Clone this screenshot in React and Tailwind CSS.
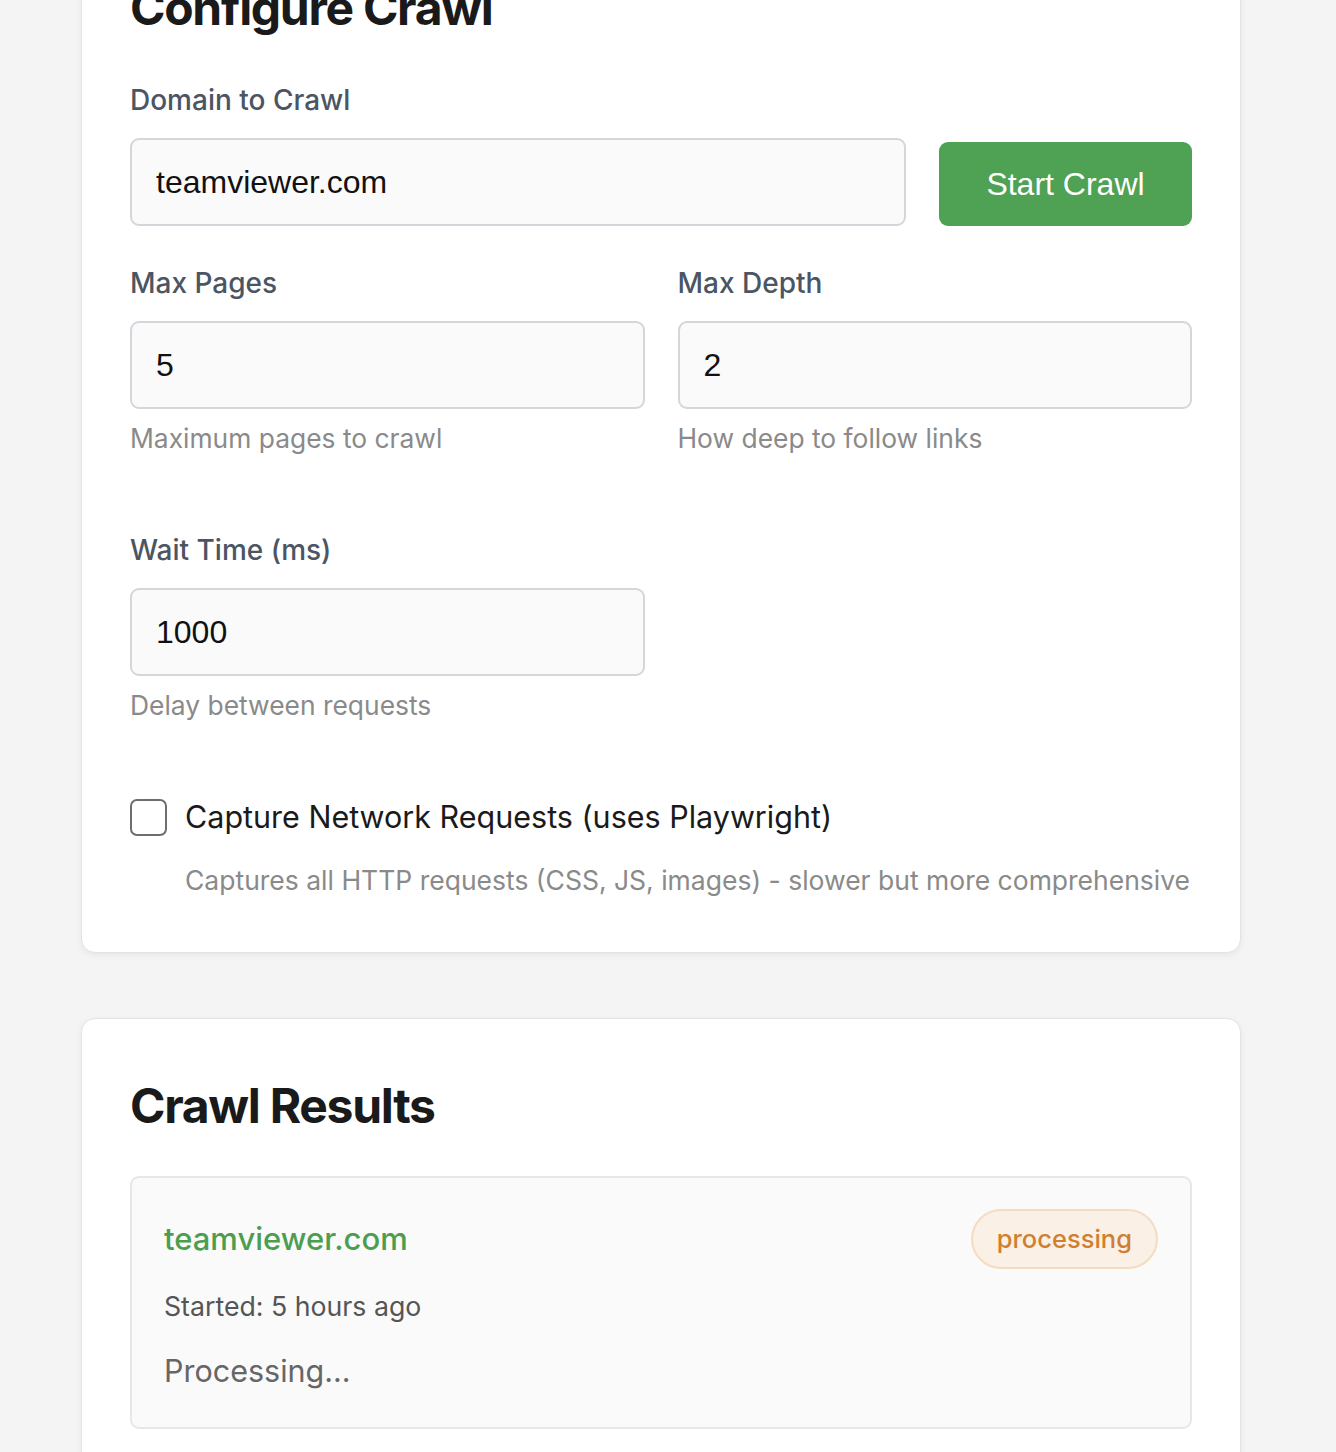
import React from "react";

const sans = { fontFamily: "Inter, 'Noto Sans', sans-serif" };

const Field = ({ label, value, help, className = "" }) => (
  <div className={className}>
    <label className="block text-[28px] leading-[42px] font-medium text-[#4b5563] mb-[17px]">{label}</label>
    <input
      readOnly
      value={value}
      className="block w-full h-[88px] px-[24px] bg-[#fafafa] border-2 border-[#d4d6db] rounded-[9px] text-[32px] text-[#111] outline-none font-['Liberation_Sans',Arial,sans-serif]"
    />
    {help && <p className="mt-[10px] text-[26.4px] leading-[39px] text-[#8a8a8a]">{help}</p>}
  </div>
);

export default function App() {
  return (
    <div className="min-h-screen bg-[#f4f4f4] overflow-hidden" style={sans}>
      <div className="-mt-[80px] pl-[81px] pb-[40px]">
        {/* Configure card */}
        <div className="w-[1160px] bg-white border border-[#e3e3e3] rounded-[14px] shadow-[0_2px_6px_rgba(0,0,0,0.06)] px-[48px] pt-[58px] pb-[52px]">
          <h2 className="text-[48px] leading-[58px] font-bold text-[#1a1a1a] tracking-[-1.3px] mb-[42px]">Configure Crawl</h2>

          <div className="flex items-end gap-[33px]">
            <Field label="Domain to Crawl" value="teamviewer.com" className="flex-1" />
            <button className="shrink-0 h-[84px] w-[253px] bg-[#4fa153] rounded-[9px] text-white text-[32px] font-['Liberation_Sans',Arial,sans-serif]">
              Start Crawl
            </button>
          </div>

          <div className="grid grid-cols-2 gap-x-[33px] mt-[36px]">
            <Field label="Max Pages" value="5" help="Maximum pages to crawl" />
            <Field label="Max Depth" value="2" help="How deep to follow links" />
            <Field label="Wait Time (ms)" value="1000" help="Delay between requests" className="mt-[71px]" />
          </div>

          <div className="mt-[70px]">
            <label className="flex items-center gap-[18px]">
              <span className="w-[37px] h-[37px] shrink-0 border-2 border-[#6e6e6e] rounded-[7px] bg-white" />
              <span className="text-[30.5px] leading-[44px] text-[#1a1a1a]">Capture Network Requests (uses Playwright)</span>
            </label>
            <p className="mt-[22px] pl-[55px] text-[26.5px] leading-[39px] text-[#8a8a8a]">
              Captures all HTTP requests (CSS, JS, images) - slower but more comprehensive
            </p>
          </div>
        </div>

        {/* Results card */}
        <div className="mt-[65px] w-[1160px] bg-white border border-[#e3e3e3] rounded-[14px] shadow-[0_2px_6px_rgba(0,0,0,0.06)] px-[48px] pt-[58px] pb-[60px]">
          <h2 className="text-[48px] leading-[58px] font-bold text-[#1a1a1a] tracking-[-1.3px] mb-[41px]">Crawl Results</h2>

          <div className="bg-[#fafafa] border-2 border-[#e6e7ea] rounded-[9px] px-[32px] pt-[31px] pb-[34px]">
            <div className="flex items-center justify-between">
              <span className="text-[31px] font-medium text-[#4b9e50]">teamviewer.com</span>
              <span className="h-[60px] flex items-center px-[24px] rounded-full bg-[#faf0e6] border-2 border-[#f4dcbf] text-[25.5px] font-medium text-[#d07f30]">
                processing
              </span>
            </div>
            <p className="mt-[18px] text-[26.7px] leading-[39px] text-[#555]">Started: 5 hours ago</p>
            <p className="mt-[22px] text-[30.5px] leading-[45px] text-[#666]">Processing...</p>
          </div>
        </div>
      </div>
    </div>
  );
}
